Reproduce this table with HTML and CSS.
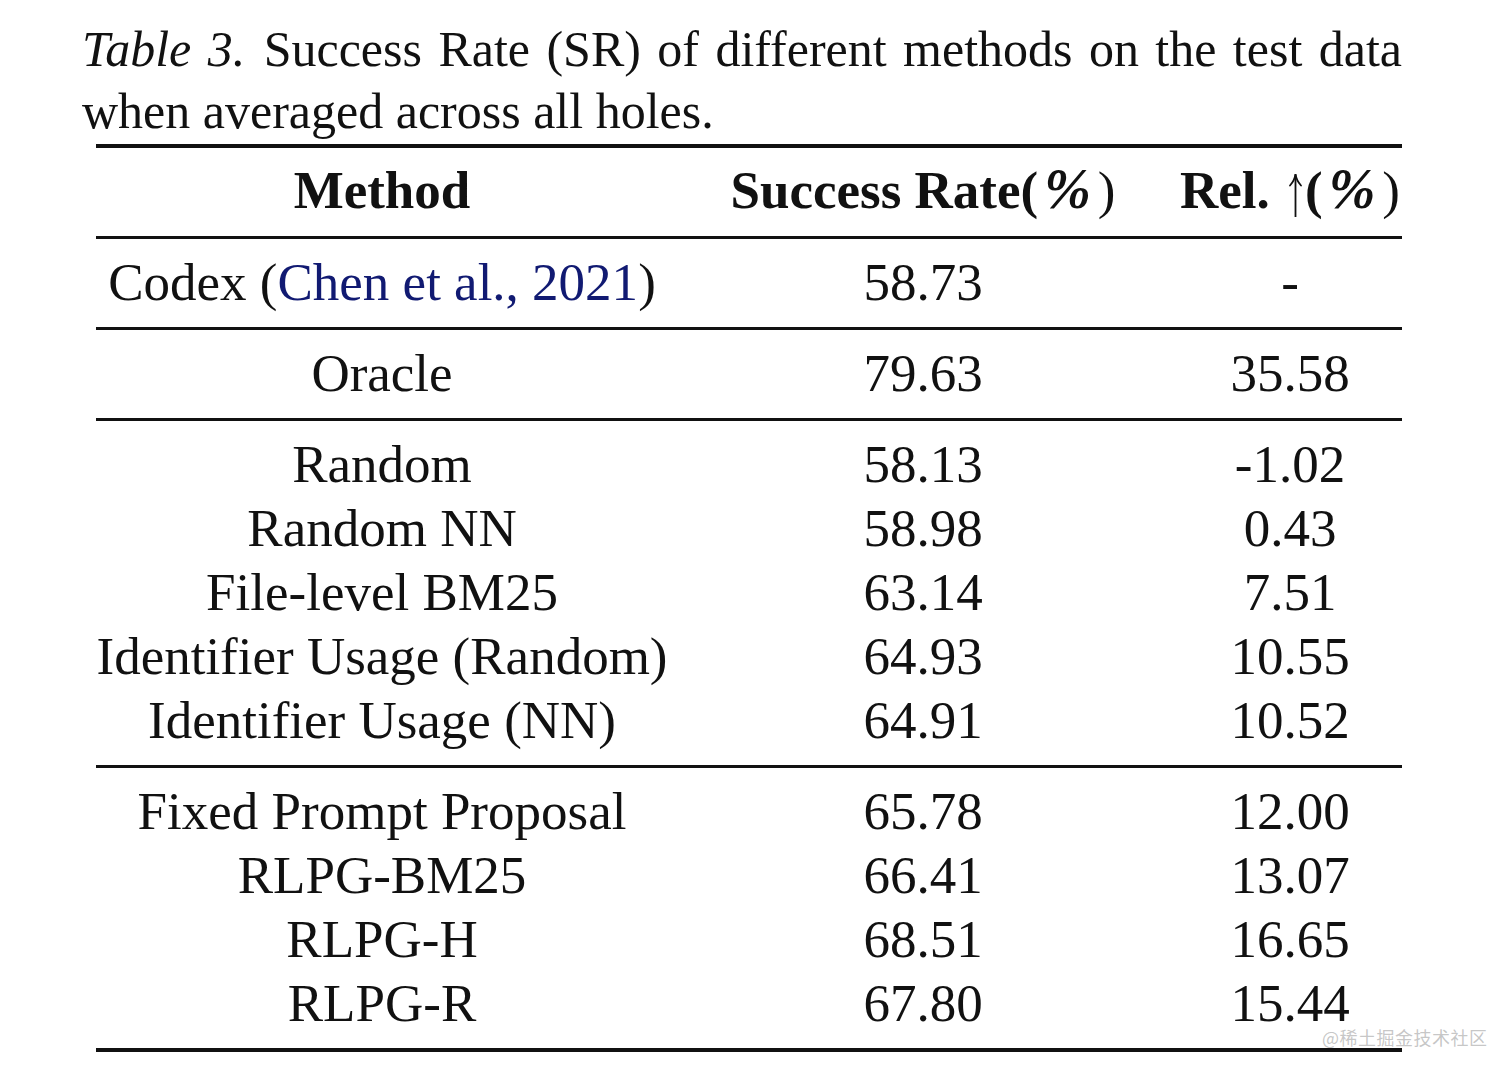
FILE: index.html
```html
<!DOCTYPE html>
<html lang="en">
<head>
<meta charset="utf-8">
<title>Table 3</title>
<link rel="stylesheet" href="styles.css">
</head>
<body>
<main class="page">
  <p class="caption"><em>Table 3.</em> Success Rate (SR) of different methods on the test data when averaged across all holes.</p>
  <table class="results">
    <colgroup>
      <col class="c-method">
      <col class="c-sr">
      <col class="c-rel">
    </colgroup>
    <thead>
      <tr>
        <th>Method</th>
        <th>Success Rate(<span class="pct">%</span><span class="thin">)</span></th>
        <th>Rel. <svg class="arrow" viewBox="0 0 13 44" aria-hidden="true"><path d="M6.5 2 V44" /><path d="M1 12.5 C3.8 9.5 5.8 6 6.5 1.2 C7.2 6 9.2 9.5 12 12.5" /></svg>(<span class="pct">%</span><span class="thin">)</span></th>
      </tr>
    </thead>
    <tbody>
      <tr><td>Codex (<a class="cite">Chen et al., 2021</a>)</td><td>58.73</td><td>-</td></tr>
    </tbody>
    <tbody>
      <tr><td>Oracle</td><td>79.63</td><td>35.58</td></tr>
    </tbody>
    <tbody>
      <tr><td>Random</td><td>58.13</td><td>-1.02</td></tr>
      <tr><td>Random NN</td><td>58.98</td><td>0.43</td></tr>
      <tr><td>File-level BM25</td><td>63.14</td><td>7.51</td></tr>
      <tr><td>Identifier Usage (Random)</td><td>64.93</td><td>10.55</td></tr>
      <tr><td>Identifier Usage (NN)</td><td>64.91</td><td>10.52</td></tr>
    </tbody>
    <tbody class="last">
      <tr><td>Fixed Prompt Proposal</td><td>65.78</td><td>12.00</td></tr>
      <tr><td>RLPG-BM25</td><td>66.41</td><td>13.07</td></tr>
      <tr><td>RLPG-H</td><td>68.51</td><td>16.65</td></tr>
      <tr><td>RLPG-R</td><td>67.80</td><td>15.44</td></tr>
    </tbody>
  </table>
  <div class="watermark">@稀土掘金技术社区</div>
</main>
</body>
</html>
```

FILE: styles.css
```css
html, body {
  margin: 0;
  padding: 0;
  background: #ffffff;
}

.page {
  position: relative;
  width: 1512px;
  height: 1076px;
  font-family: "Liberation Serif", "Times New Roman", serif;
  color: #111111;
}

.caption {
  margin: 0 0 0 82px;
  padding-top: 18px;
  width: 1320px;
  font-size: 50px;
  line-height: 62px;
  text-align: justify;
}

.caption em {
  font-style: italic;
  padding-right: 2px;
}

.results {
  margin: 2px 0 0 96px;
  width: 1306px;
  table-layout: fixed;
  border-collapse: separate;
  border-spacing: 0;
  border-top: 4px solid #111111;
  font-size: 53px;
  line-height: 64px;
}

.c-method { width: 572px; }
.c-sr { width: 510px; }
.c-rel { width: 224px; }

.results th,
.results td {
  padding: 0;
  text-align: center;
  white-space: nowrap;
}

.results th {
  font-weight: bold;
  height: 64px;
  padding: 10px 0 14px;
  border-bottom: 3px solid #111111;
}

.results tbody tr:first-child td {
  padding-top: 11px;
}

.results tbody tr:last-child td {
  padding-bottom: 13px;
  border-bottom: 3px solid #111111;
}

.results tbody.last tr:last-child td {
  border-bottom-width: 4px;
}

.pct {
  font-style: italic;
  font-size: 56px;
  line-height: 1;
  margin: 0 7px 0 6px;
}

.thin {
  font-weight: normal;
}

.arrow {
  width: 13px;
  height: 44px;
  vertical-align: -9px;
  margin: 0 3px 0 6px;
  fill: none;
  stroke: #111111;
  stroke-width: 1.8;
  stroke-linecap: round;
}

.cite {
  color: #111a72;
  text-decoration: none;
}

.watermark {
  position: absolute;
  left: 1322px;
  top: 1026px;
  font-family: "Noto Sans CJK SC", "Noto Sans", sans-serif;
  font-size: 18px;
  line-height: 22px;
  color: rgba(150, 150, 150, 0.55);
  letter-spacing: 0.5px;
}
```
